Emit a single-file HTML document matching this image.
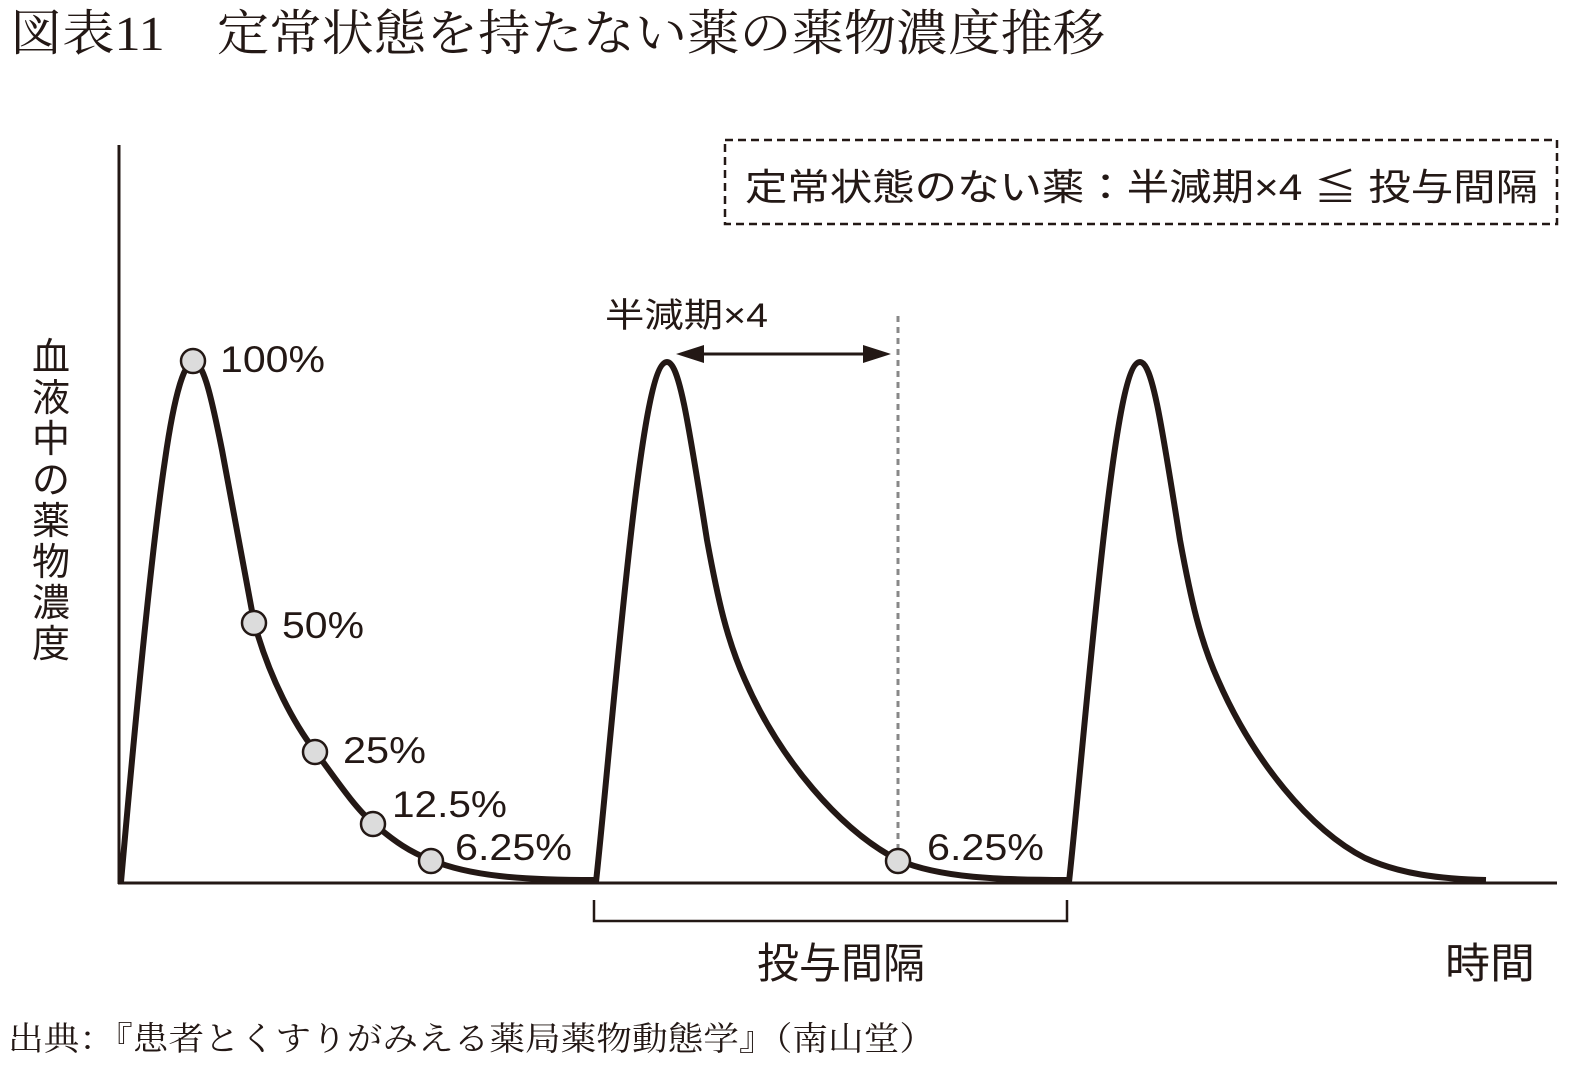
<!DOCTYPE html>
<html><head><meta charset="utf-8"><style>
html,body{margin:0;padding:0;background:#fff;}
svg{display:block}
.s{font-family:"Liberation Serif","Noto Serif CJK SC","Noto Sans CJK JP",serif;fill:#231815}
.g{font-family:"Liberation Sans","Noto Sans CJK JP",sans-serif;fill:#231815}
</style></head><body>
<svg width="1586" height="1073" viewBox="0 0 1586 1073" xmlns="http://www.w3.org/2000/svg">
<text class="s" x="10" y="50" font-size="49" textLength="1095" lengthAdjust="spacingAndGlyphs">図表11　定常状態を持たない薬の薬物濃度推移</text>
<rect x="725" y="140" width="832" height="84" fill="none" stroke="#231815" stroke-width="2.5" stroke-dasharray="8,5"/>
<text class="g" x="745" y="200" font-size="37" textLength="793" lengthAdjust="spacingAndGlyphs">定常状態のない薬：半減期×4 ≦ 投与間隔</text>
<g class="g" font-size="38">
<text x="32" y="370">血</text><text x="32" y="411">液</text><text x="32" y="452">中</text><text x="32" y="493">の</text>
<text x="32" y="534">薬</text><text x="32" y="575">物</text><text x="32" y="616">濃</text><text x="32" y="657">度</text>
</g>
<line x1="119" y1="145" x2="119" y2="884" stroke="#231815" stroke-width="3"/>
<line x1="118" y1="883" x2="1557" y2="883" stroke="#231815" stroke-width="3"/>
<line x1="898" y1="316" x2="898" y2="852" stroke="#888" stroke-width="3" stroke-dasharray="6,5"/>
<g fill="none" stroke="#231815" stroke-width="6" stroke-linejoin="round">
<path d="M121,882 C130,780 150,560 165,460 C175,390 185,362 193,362 C203,362 210,390 222,450 L254,622 C270,680 295,725 315,751 C335,778 355,808 373,823 C395,842 410,852 431,860 C470,876 520,880 595,880"/>
<path d="M596,882 C605,800 620,620 635,500 C645,420 655,362 667,362 C679,362 688,420 707,540 C718,600 727,640 745,680 C780,760 840,830 898,860 C940,878 1000,880 1068,880"/>
<path d="M1069,882 C1078,800 1093,620 1108,500 C1118,420 1128,362 1140,362 C1152,362 1161,420 1180,540 C1191,600 1200,640 1218,680 C1253,760 1310,830 1365,858 C1400,874 1440,879 1486,880"/>
</g>
<g fill="#dcdcdc" stroke="#231815" stroke-width="2.5">
<circle cx="193" cy="361" r="12"/><circle cx="254" cy="623" r="12"/><circle cx="315" cy="752" r="12"/>
<circle cx="373" cy="824" r="12"/><circle cx="431" cy="861" r="12"/><circle cx="898" cy="861" r="12"/>
</g>
<g class="g" font-size="37">
<text x="220" y="372" textLength="105" lengthAdjust="spacingAndGlyphs">100%</text>
<text x="282" y="638" textLength="82" lengthAdjust="spacingAndGlyphs">50%</text>
<text x="343" y="763" textLength="83" lengthAdjust="spacingAndGlyphs">25%</text>
<text x="392" y="817" textLength="115" lengthAdjust="spacingAndGlyphs">12.5%</text>
<text x="455" y="860" textLength="117" lengthAdjust="spacingAndGlyphs">6.25%</text>
<text x="927" y="860" textLength="117" lengthAdjust="spacingAndGlyphs">6.25%</text>
<text x="605" y="327" font-size="34" textLength="163" lengthAdjust="spacingAndGlyphs">半減期×4</text>
</g>
<line x1="690" y1="354" x2="878" y2="354" stroke="#231815" stroke-width="3"/>
<polygon points="676,354 704,345 704,363" fill="#231815"/>
<polygon points="891,354 863,345 863,363" fill="#231815"/>
<path d="M594,900 V921 H1067 V900" fill="none" stroke="#231815" stroke-width="2.5"/>
<text class="g" x="757" y="978" font-size="42" textLength="168" lengthAdjust="spacingAndGlyphs">投与間隔</text>
<text class="g" x="1445" y="978" font-size="42" textLength="90" lengthAdjust="spacingAndGlyphs">時間</text>
<text class="s" x="8" y="1050" font-size="33" textLength="927" lengthAdjust="spacingAndGlyphs">出典：『患者とくすりがみえる薬局薬物動態学』（南山堂）</text>
</svg>
</body></html>
